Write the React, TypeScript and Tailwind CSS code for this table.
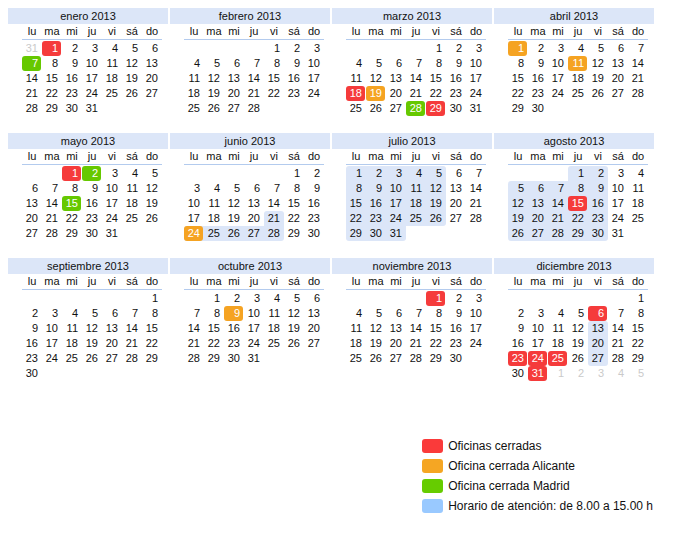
import React from "react";

type Mark = "red" | "orange" | "green";

type Month = {
  name: string;
  start: number;
  days: number;
  prev?: number[];
  next?: number[];
  marks?: Record<number, Mark>;
  blue?: number[];
};

const weekdays = (from: number, to: number, start: number) => {
  const out: number[] = [];
  for (let d = from; d <= to; d++) {
    if ((start + d - 1) % 7 < 5) out.push(d);
  }
  return out;
};

const months: Month[] = [
  { name: "enero", start: 1, days: 31, prev: [31], marks: { 1: "red", 7: "green" } },
  { name: "febrero", start: 4, days: 28 },
  { name: "marzo", start: 4, days: 31, marks: { 18: "red", 19: "orange", 28: "green", 29: "red" } },
  { name: "abril", start: 0, days: 30, marks: { 1: "orange", 11: "orange" } },
  { name: "mayo", start: 2, days: 31, marks: { 1: "red", 2: "green", 15: "green" } },
  { name: "junio", start: 5, days: 30, marks: { 24: "orange" }, blue: weekdays(21, 30, 5) },
  { name: "julio", start: 0, days: 31, blue: weekdays(1, 31, 0) },
  { name: "agosto", start: 3, days: 31, marks: { 15: "red" }, blue: weekdays(1, 31, 3) },
  { name: "septiembre", start: 6, days: 30 },
  { name: "octubre", start: 1, days: 31, marks: { 9: "orange" } },
  { name: "noviembre", start: 4, days: 30, marks: { 1: "red" } },
  {
    name: "diciembre",
    start: 6,
    days: 31,
    next: [1, 2, 3, 4, 5],
    marks: { 6: "red", 23: "red", 24: "red", 25: "red", 31: "red" },
    blue: [13, 20, 27],
  },
];

const markBg: Record<Mark, string> = {
  red: "bg-[#f53b3b]",
  orange: "bg-[#f5a322]",
  green: "bg-[#66c800]",
};

type Cell = { day: number; other: boolean } | null;

const buildCells = (m: Month): Cell[] => {
  const cells: Cell[] = [];
  for (let i = 0; i < m.start; i++) {
    const p = m.prev ? m.prev[m.prev.length - m.start + i] : undefined;
    cells.push(p ? { day: p, other: true } : null);
  }
  for (let d = 1; d <= m.days; d++) cells.push({ day: d, other: false });
  const nx = m.next ?? [];
  let k = 0;
  while (cells.length < 42) {
    const n = nx[k++];
    cells.push(n ? { day: n, other: true } : null);
  }
  return cells;
};

const MonthBox = ({ m }: { m: Month }) => {
  const cells = buildCells(m);
  const blue = new Set(m.blue ?? []);
  const isBlue = (i: number) => {
    if (i < 0 || i >= 42) return false;
    const c = cells[i];
    return !!c && !c.other && blue.has(c.day);
  };

  return (
    <div className="w-[160px]">
      <div className="h-4 bg-[#dce6f8] text-center text-[11px] leading-4 text-[#111]">{m.name} 2013</div>
      <div className="ml-[14px] w-[140px]">
        <div className="grid grid-cols-7 border-b border-[#b3cbee] text-center text-[11px] leading-[15px] text-[#111]">
          {["lu", "ma", "mi", "ju", "vi", "sá", "do"].map((d) => (
            <div key={d}>{d}</div>
          ))}
        </div>
        <div className="mt-px grid grid-cols-7">
          {cells.map((c, i) => {
            const col = i % 7;
            const b = isBlue(i);
            const up = isBlue(i - 7);
            const down = isBlue(i + 7);
            const left = col > 0 && isBlue(i - 1);
            const right = col < 6 && isBlue(i + 1);
            const mark = c && !c.other ? m.marks?.[c.day] : undefined;
            return (
              <div
                key={i}
                className={[
                  "h-[15px] w-[20px]",
                  b ? "bg-[#dce6f8]" : "",
                  b && !up && !left ? "rounded-tl-[3px]" : "",
                  b && !up && !right ? "rounded-tr-[3px]" : "",
                  b && !down && !left ? "rounded-bl-[3px]" : "",
                  b && !down && !right ? "rounded-br-[3px]" : "",
                ].join(" ")}
              >
                {c && (
                  <div
                    className={[
                      "h-[15px] w-[19px] rounded-[3px] pr-[3px] text-right text-[11px] leading-[15px]",
                      mark ? markBg[mark] + " text-white" : c.other ? "text-[#cacaca]" : "text-[#111]",
                    ].join(" ")}
                  >
                    {c.day}
                  </div>
                )}
              </div>
            );
          })}
        </div>
      </div>
    </div>
  );
};

const legend = [
  { color: "bg-[#fa3a3a]", label: "Oficinas cerradas" },
  { color: "bg-[#f5a623]", label: "Oficina cerrada Alicante" },
  { color: "bg-[#66cc00]", label: "Oficina cerrada Madrid" },
  { color: "bg-[#99c9ff]", label: "Horario de atención: de 8.00 a 15.00 h" },
];

export default function App() {
  return (
    <div className="h-[534px] w-[680px] bg-white p-2 font-['Liberation_Sans',Arial,sans-serif]">
      <div className="flex w-[646px] flex-col">
        <div className="grid grid-cols-4 gap-[2px]">
          {months.map((m) => (
            <MonthBox key={m.name} m={m} />
          ))}
        </div>
        <div className="mt-[58px] flex flex-col gap-[6px] self-end pr-px">
          {legend.map((l) => (
            <div key={l.label} className="flex h-[14px] items-center gap-[5px]">
              <div className={"h-[14px] w-[21px] rounded-[3px] " + l.color} />
              <span className="text-[12px] leading-[14px] text-[#111]">{l.label}</span>
            </div>
          ))}
        </div>
      </div>
    </div>
  );
}
